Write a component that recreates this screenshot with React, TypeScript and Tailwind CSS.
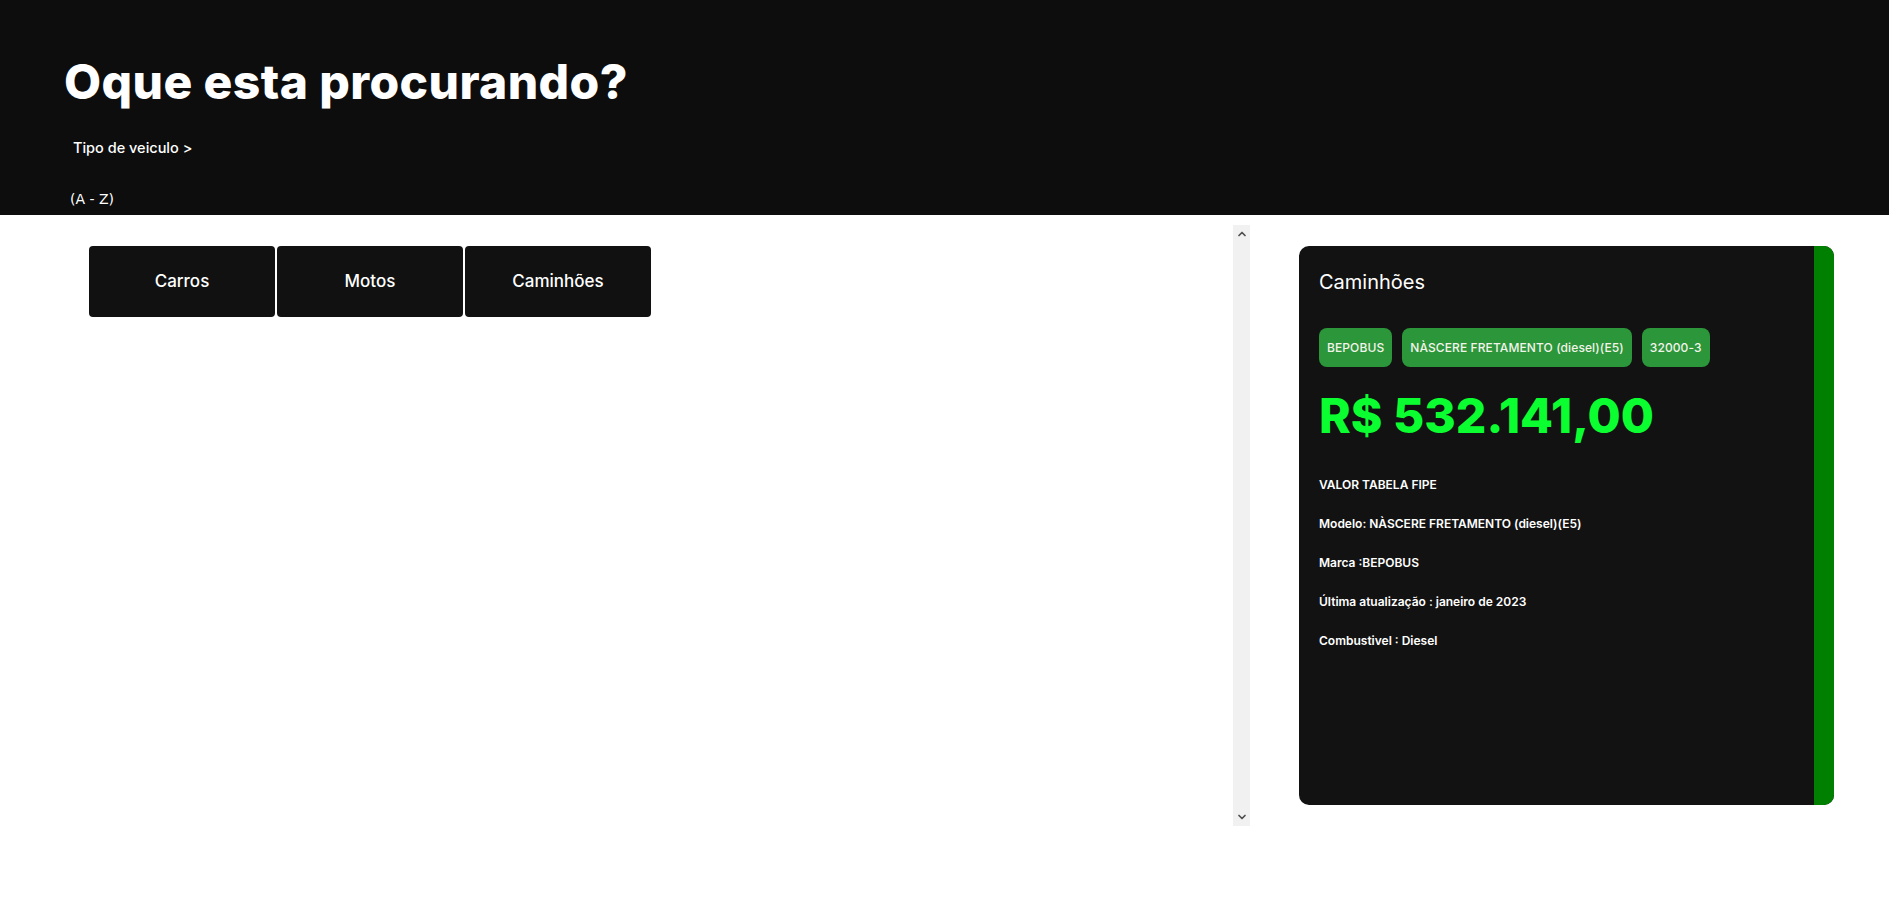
import { ChevronUp, ChevronDown } from 'lucide-react'

const tipos = ['Carros', 'Motos', 'Caminhões']

const badges = ['BEPOBUS', 'NÀSCERE FRETAMENTO (diesel)(E5)', '32000-3']

const infos = [
  'VALOR TABELA FIPE',
  'Modelo: NÀSCERE FRETAMENTO (diesel)(E5)',
  'Marca :BEPOBUS',
  'Última atualização : janeiro de 2023',
  'Combustivel : Diesel',
]

export default function App() {
  return (
    <div className="min-h-[901px] bg-white font-['Inter',sans-serif]">
      <header className="h-[215px] bg-[#0d0d0d] pl-[64px] pt-[52px] text-white">
        <h1 className="text-[48px] font-extrabold leading-[60px] tracking-[0.4px]">Oque esta procurando?</h1>
        <p className="mt-[26px] pl-[9px] text-[14.5px] font-medium leading-[20px]">Tipo de veiculo &gt;</p>
        <p className="mt-[31px] pl-[6px] font-['DejaVu_Sans',sans-serif] text-[14px] leading-[20px]">(A - Z)</p>
      </header>

      <main className="flex items-start pt-[10px] pl-[64px]">
        <section className="flex h-[601px] w-[1186px]">
          <div className="flex-1 pl-[25px] pt-[21px]">
            <div className="flex gap-[2px]">
              {tipos.map(t => (
                <button
                  key={t}
                  className="h-[71px] w-[186px] rounded-[4px] bg-[#111111] text-[17px] font-medium text-white"
                >
                  {t}
                </button>
              ))}
            </div>
          </div>
          <div className="flex w-[17px] flex-col items-center justify-between bg-[#f1f1f1] py-[3px]">
            <ChevronUp className="h-[12px] w-[12px] text-[#505050]" strokeWidth={3.5} />
            <ChevronDown className="h-[12px] w-[12px] text-[#505050]" strokeWidth={3.5} />
          </div>
        </section>

        <aside className="ml-[49px] mt-[21px] flex h-[559px] w-[535px] overflow-hidden rounded-[10px] bg-[#121212]">
          <div className="flex-1 pl-[20px] pt-[21px] text-white">
            <h2 className="text-[20px] leading-[30px]">Caminhões</h2>
            <div className="mt-[31px] flex gap-[10px]">
              {badges.map(b => (
                <span
                  key={b}
                  className="flex h-[39px] items-center rounded-[8px] bg-[#2b963a] px-[8px] text-[12px] font-medium tracking-[0.1px] text-[#f3f3ea]"
                >
                  {b}
                </span>
              ))}
            </div>
            <p className="mt-[19px] text-[48px] font-extrabold leading-[60px] text-[#0bff30]">R$ 532.141,00</p>
            <div className="mt-[29px] flex flex-col gap-[19px]">
              {infos.map(i => (
                <p key={i} className="text-[12px] font-semibold leading-[20px]">
                  {i}
                </p>
              ))}
            </div>
          </div>
          <div className="w-[20px] bg-[#008000]" />
        </aside>
      </main>
    </div>
  )
}
